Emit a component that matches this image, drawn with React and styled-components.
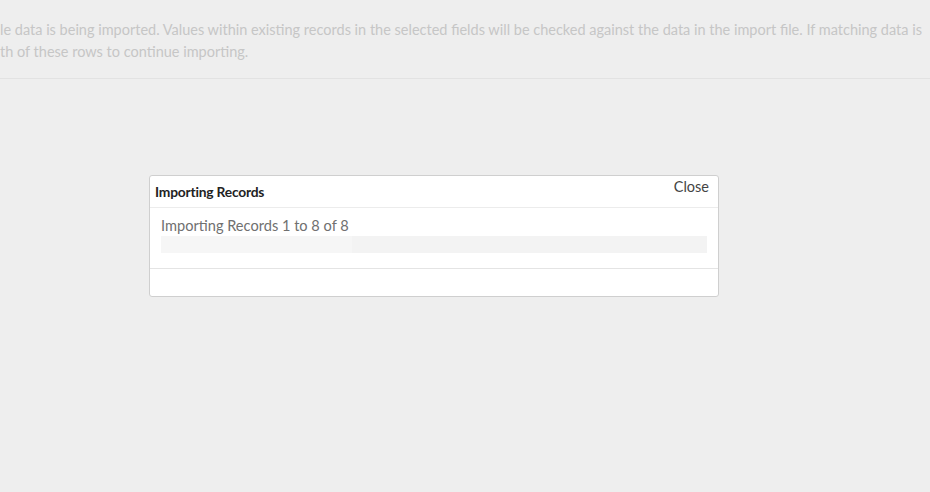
import React from "react";
import styled, { createGlobalStyle } from "styled-components";

const Global = createGlobalStyle`
  html, body {
    margin: 0;
    padding: 0;
    background: #eeeeee;
  }
  body {
    font-family: Lato, "Open Sans", sans-serif;
    overflow: hidden;
  }
`;

const Page = styled.div`
  width: 930px;
  height: 492px;
  overflow: hidden;
  background: #eeeeee;
`;

const Notice = styled.div`
  padding-top: 19px;
  padding-bottom: 15px;
  border-bottom: 1px solid #e2e2e2;
`;

const NoticeLine = styled.div`
  font-size: 14.5px;
  line-height: 22px;
  color: #c6c6c6;
  white-space: nowrap;
  overflow: hidden;
`;

const Modal = styled.div`
  width: 568px;
  margin: 96px 0 0 149px;
  background: #ffffff;
  border: 1px solid #cfcfcf;
  border-radius: 3px;
  color: #333;
`;

const ModalHead = styled.div`
  display: flex;
  justify-content: space-between;
  align-items: flex-start;
  height: 31px;
  padding: 0 9px 0 5px;
  border-bottom: 1px solid #ececec;
`;

const Title = styled.h4`
  margin: 0;
  padding-top: 7px;
  font-size: 13.8px;
  font-weight: 700;
  letter-spacing: -0.2px;
  color: #222;
`;

const CloseLink = styled.span`
  padding-top: 2px;
  font-size: 14.5px;
  color: #444;
  cursor: pointer;
`;

const ModalBody = styled.div`
  padding: 7px 11px 15px 11px;
  border-bottom: 1px solid #e4e4e4;
`;

const Status = styled.div`
  font-size: 14.6px;
  line-height: 21px;
  color: #707070;
`;

const Track = styled.div`
  height: 17px;
  background: #f3f3f3;
  overflow: hidden;
`;

const Fill = styled.div`
  height: 100%;
  background: #f6f6f6;
`;

const ModalFoot = styled.div`
  height: 27px;
`;

export default function App() {
  const done = 8;
  const total = 8;
  return (
    <>
      <Global />
      <Page>
        <Notice>
          <NoticeLine>
            le data is being imported. Values within existing records in the selected fields will be checked against the data in the import file. If matching data is
          </NoticeLine>
          <NoticeLine>th of these rows to continue importing.</NoticeLine>
        </Notice>
        <Modal>
          <ModalHead>
            <Title>Importing Records</Title>
            <CloseLink>Close</CloseLink>
          </ModalHead>
          <ModalBody>
            <Status>
              Importing Records 1 to {done} of {total}
            </Status>
            <Track>
              <Fill style={{ width: `${(done / total) * 35}%` }} />
            </Track>
          </ModalBody>
          <ModalFoot />
        </Modal>
      </Page>
    </>
  );
}
